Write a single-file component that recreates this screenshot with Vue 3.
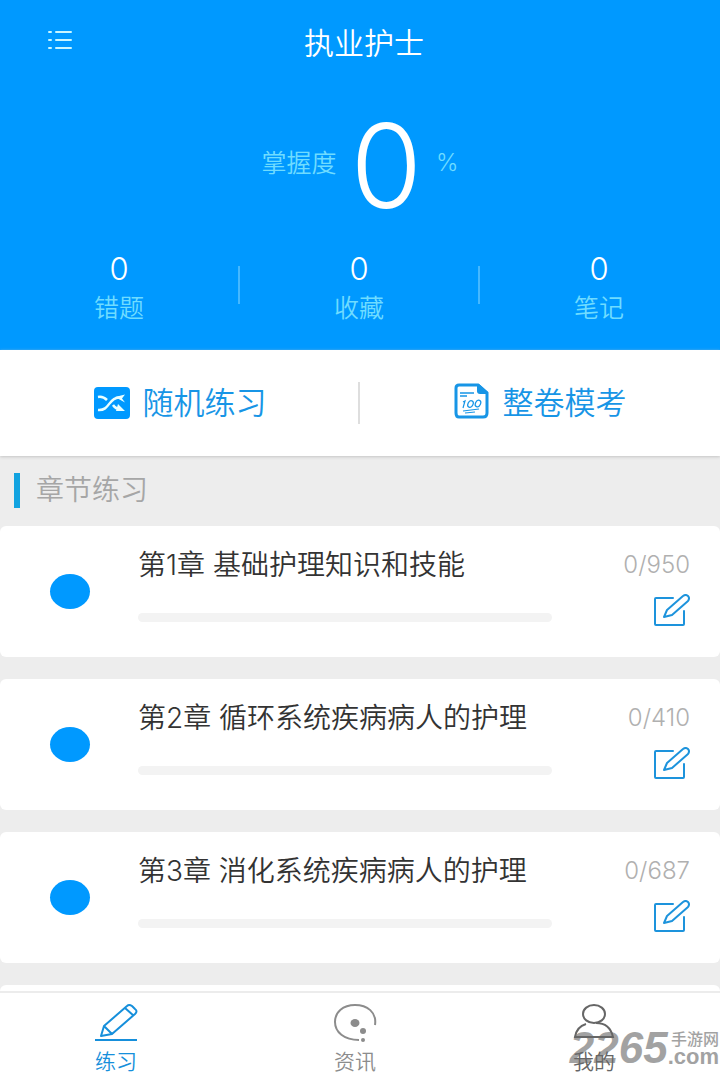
<script setup>
const stats = [
  { value: 0, label: '错题' },
  { value: 0, label: '收藏' },
  { value: 0, label: '笔记' },
]
const chapters = [
  { title: '第1章 基础护理知识和技能', done: 0, total: 950 },
  { title: '第2章 循环系统疾病病人的护理', done: 0, total: 410 },
  { title: '第3章 消化系统疾病病人的护理', done: 0, total: 687 },
]
</script>

<template>
  <div class="page">
    <header class="hero">
      <div class="topbar">
        <button class="menu" type="button" aria-label="菜单">
          <svg width="24" height="20" viewBox="0 0 24 20" stroke="currentColor" stroke-width="2" stroke-linecap="round">
            <path d="M1 2h2M8 2h15M1 10h2M8 10h15M1 18h2M8 18h15" />
          </svg>
        </button>
        <h1>执业护士</h1>
      </div>
      <div class="score">
        <span class="score-label">掌握度</span>
        <strong>0</strong>
        <span class="percent">%</span>
      </div>
      <div class="stats">
        <div v-for="s in stats" :key="s.label" class="stat">
          <span class="stat-value">{{ s.value }}</span>
          <span class="stat-label">{{ s.label }}</span>
        </div>
      </div>
    </header>

    <section class="actions">
      <button type="button">
        <svg width="36" height="32" viewBox="0 0 36 32">
          <rect width="36" height="32" rx="4" fill="#0099ff" />
          <g fill="none" stroke="#eaffff" stroke-width="2.500">
            <path d="M4 10c5-1 7 1 9 3M4 23c12 1 10-12 21-12.500M19 18c2 3 4 4 7 4" />
          </g>
          <path d="M21 10 31 7.500l-3 4 3 4zM22 24l2-7 7 7z" fill="#eaffff" />
        </svg>
        <span>随机练习</span>
      </button>
      <button type="button">
        <svg class="paper" width="36" height="36" viewBox="0 0 36 36" fill="none" stroke="#1795e6">
          <path d="M5 2h19l9 8v20q0 4-4 4H5q-3 0-3-4V5q0-3 3-3z" stroke-width="3" />
          <path d="M23 1v7q0 3 3 3h8V9L25 1z" fill="#1795e6" stroke="none" />
          <path d="M6 10h14M6 13h7" stroke-width="1.500" />
          <path d="M9 19l2-1-2 7M9 28l16-2M11 30l10-1" stroke-width="1.200" />
          <ellipse cx="16.500" cy="21" rx="2.500" ry="3.500" transform="rotate(25 16.500 21)" stroke-width="1.300" />
          <ellipse cx="24" cy="20.500" rx="2.500" ry="3.500" transform="rotate(25 24 20.500)" stroke-width="1.300" />
        </svg>
        <span>整卷模考</span>
      </button>
    </section>

    <main>
      <h2>章节练习</h2>
      <ul>
        <li v-for="c in chapters" :key="c.title" class="card">
          <span class="dot"></span>
          <div class="info">
            <h3>{{ c.title }}</h3>
            <div class="track"><div class="fill" :style="{ width: (c.done / c.total) * 100 + '%' }"></div></div>
          </div>
          <div class="side">
            <span class="count">{{ c.done }}/{{ c.total }}</span>
            <button type="button" :aria-label="c.title">
              <svg width="38" height="34" viewBox="0 0 38 34" fill="none" stroke="#1d93dc" stroke-width="2" stroke-linejoin="round" stroke-linecap="round">
                <path d="M21 4H4q-1 0-1 1v25q0 1 1 1h27q1 0 1-1V17" />
                <path d="M12 23l3-7L31 2q3-2 5 0 2 2 0 5L20 21z" />
              </svg>
            </button>
          </div>
        </li>
        <li class="card next"></li>
      </ul>
    </main>

    <nav>
      <button type="button" class="active">
        <svg width="44" height="40" viewBox="0 0 44 40" fill="none" stroke="currentColor" stroke-width="2" stroke-linejoin="round">
          <path d="M1 37h42" />
          <path d="M7 33l3-10L33 3q2-2 5 0l3 3q3 2 0 5L18 31zM10 23l8 8M31 5l9 8" />
        </svg>
        <span>练习</span>
      </button>
      <button type="button">
        <svg width="44" height="40" viewBox="0 0 44 40" fill="none" stroke="currentColor" stroke-width="2">
          <path d="M42 22C44 9 34 2 22 2S2 9 2 19s9 18 24 18" />
          <g fill="currentColor" stroke="none">
            <ellipse cx="22" cy="20" rx="4.500" ry="4" />
            <circle cx="30" cy="28" r="3" />
            <circle cx="30" cy="37" r="2" />
          </g>
        </svg>
        <span>资讯</span>
      </button>
      <button type="button">
        <svg width="44" height="40" viewBox="0 0 44 40" fill="none" stroke="currentColor" stroke-width="2">
          <ellipse cx="22" cy="11" rx="11" ry="9" />
          <path d="M14 21C7 23 4 28 3 34h38c-2-9-7-14-17-14" />
        </svg>
        <span>我的</span>
      </button>
      <div class="watermark">
        <span class="mark-number">2265</span>
        <span class="mark-side"><span>手游网</span><b>.com</b></span>
      </div>
    </nav>
  </div>
</template>

<style>
body { margin: 0; }
</style>

<style scoped>
.page {
  height: 100vh;
  display: flex;
  flex-direction: column;
  overflow: hidden;
  background: #ededed;
  font-family: Inter, "Noto Sans CJK SC", sans-serif;
  font-weight: 350;
}
h1, h2, h3, ul { margin: 0; padding: 0; font-weight: 350; }
button { border: 0; padding: 0; background: none; font: inherit; color: inherit; }
svg { display: block; flex: none; }
.hero { background: #0099ff; color: #fff; flex: none; padding-bottom: 25px; }
.topbar {
  display: grid;
  grid-template-columns: 80px 1fr 72px;
  align-items: center;
  height: 86px;
}
.menu { color: #c8f6ff; justify-self: end; margin: 0 8px 6px 0; }
h1 { font-size: 30px; line-height: 40px; text-align: center; }
.score {
  display: flex;
  align-items: center;
  justify-content: center;
  height: 160px;
  gap: 14px;
  color: #6fdcff;
}
.score-label { font-size: 25px; line-height: 32px; margin-bottom: 6px; }
.score strong { font-size: 116px; line-height: 160px; font-weight: 350; color: #fff; }
.percent { font-size: 24px; line-height: 32px; margin-bottom: 6px; }
.stats { display: grid; grid-template-columns: repeat(3, 1fr); }
.stat {
  display: flex;
  flex-direction: column;
  align-items: center;
  position: relative;
  padding: 1px 2px 0 0;
}
.stat + .stat::before {
  content: "";
  position: absolute;
  left: -2px;
  top: 20px;
  width: 2px;
  height: 38px;
  background: #45b8ff;
}
.stat-value { font-size: 31px; line-height: 44px; }
.stat-label { font-size: 25px; line-height: 34px; color: #6fdcff; }
.actions {
  flex: none;
  display: grid;
  grid-template-columns: 1fr 1fr;
  background: #fff;
  height: 106px;
  box-shadow: 0 1px 3px #c4c4c4;
}
.actions button {
  display: flex;
  align-items: center;
  justify-content: center;
  gap: 13px;
  font-size: 31px;
  line-height: 42px;
  color: #1795e6;
  position: relative;
}
.actions .paper { margin-bottom: 4px; }
.actions button + button::before {
  content: "";
  position: absolute;
  left: -2px;
  top: 32px;
  width: 2px;
  height: 42px;
  background: #dedede;
}
main { flex: 1; min-height: 0; overflow: hidden; }
h2 {
  margin: 17px 14px 18px;
  padding-left: 16px;
  border-left: 6px solid #12a3e0;
  font-size: 28px;
  line-height: 35px;
  color: #a6a6a6;
}
ul { list-style: none; display: grid; gap: 22px; }
.card {
  display: flex;
  align-items: center;
  background: #fff;
  border-radius: 6px;
  padding: 0 30px 0 50px;
  height: 131px;
}
.dot { width: 40px; height: 35px; border-radius: 50%; background: #0099ff; flex: none; }
.info { flex: 1; margin-left: 48px; align-self: stretch; padding-top: 18px; }
h3 { font-size: 28px; line-height: 42px; color: #333; white-space: nowrap; }
.track { height: 9px; margin-top: 27px; border-radius: 5px; background: #f3f3f3; overflow: hidden; }
.fill { height: 100%; background: #0099ff; }
.side {
  width: 138px;
  align-self: stretch;
  padding-top: 18px;
  display: flex;
  flex-direction: column;
  align-items: flex-end;
  gap: 8px;
}
.count { font-size: 24px; line-height: 42px; font-weight: 300; color: #b0b0b0; }
nav {
  flex: none;
  position: relative;
  display: flex;
  justify-content: space-between;
  padding: 10px 86px 2px 76px;
  background: #fff;
  border-top: 2px solid #ececec;
}
nav button {
  width: 80px;
  display: flex;
  flex-direction: column;
  align-items: center;
  gap: 3px;
  font-size: 21px;
  line-height: 32px;
  color: #8c8c8c;
}
nav .active { color: #168fdb; }
nav button:nth-child(3) { color: #666; }
.watermark {
  position: absolute;
  right: 1px;
  bottom: 10px;
  display: flex;
  align-items: center;
  color: #666;
  opacity: 0.6;
  pointer-events: none;
}
.mark-number { font: italic bold 44px/44px "Liberation Sans", sans-serif; }
.mark-side { display: flex; flex-direction: column; font-size: 16px; line-height: 17px; font-weight: 500; }
.mark-side > span { text-align: right; }
.mark-side b { font: bold 22px/18px "Liberation Sans", sans-serif; }
</style>
